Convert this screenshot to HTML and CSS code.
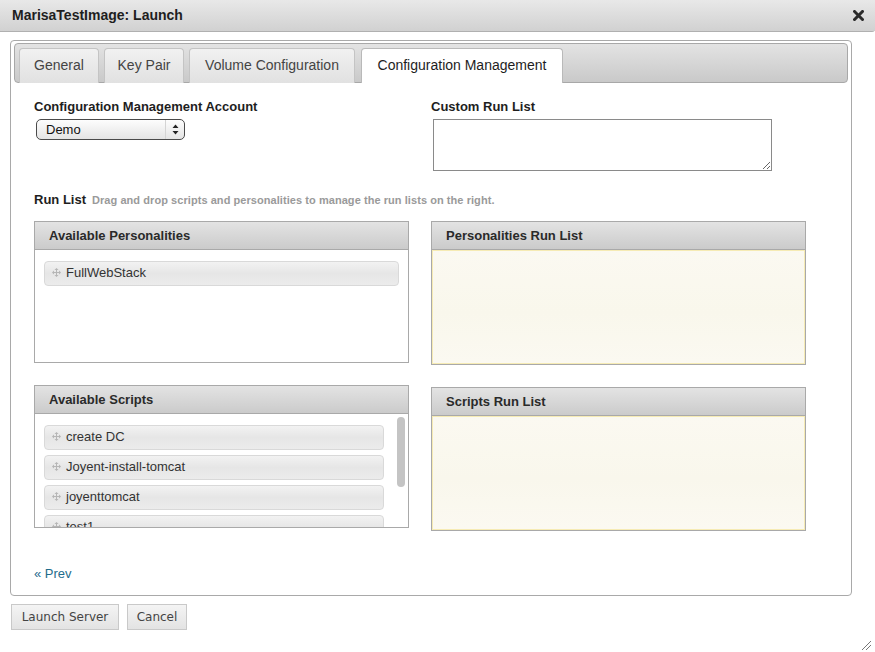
FILE: index.html
```html
<!DOCTYPE html>
<html>
<head>
<meta charset="utf-8">
<title>MarisaTestImage: Launch</title>
<link rel="stylesheet" href="styles.css">
</head>
<body>
<div class="dialog">
  <div class="titlebar">
    <span class="title">MarisaTestImage: Launch</span>
    <svg class="close" width="11" height="11" viewBox="0 0 11 11"><path d="M1.5 1.5 L9.5 9.5 M9.5 1.5 L1.5 9.5" stroke="#2a2a2a" stroke-width="3" stroke-linecap="square"/></svg>
  </div>
  <div class="content">
    <div class="panel">
      <ul class="tabs">
        <li class="tab">General</li>
        <li class="tab">Key Pair</li>
        <li class="tab">Volume Configuration</li>
        <li class="tab active">Configuration Management</li>
      </ul>
      <div class="tab-body">
        <div class="row-top">
          <div class="field">
            <div class="label">Configuration Management Account</div>
            <div class="select">
              <span class="select-text">Demo</span>
              <span class="select-arrows">
                <svg width="7" height="11" viewBox="0 0 7 11"><path d="M3.5 0.5 L6.5 4 L0.5 4 Z M0.5 7 L6.5 7 L3.5 10.5 Z" fill="#222"/></svg>
              </span>
            </div>
          </div>
          <div class="field">
            <div class="label">Custom Run List</div>
            <textarea class="textarea"></textarea>
          </div>
        </div>
        <div class="runlist-head"><span class="rl-title">Run List</span><span class="rl-hint">Drag and drop scripts and personalities to manage the run lists on the right.</span></div>
        <div class="lists">
          <div class="col">
            <div class="box box-pers">
              <div class="box-head">Available Personalities</div>
              <div class="box-body">
                <div class="items">
                  <div class="item"><svg class="move" width="9" height="9" viewBox="0 0 9 9"><path d="M4.5 0 L6.5 2 L2.5 2 Z M4.5 9 L6.5 7 L2.5 7 Z M0 4.5 L2 2.5 L2 6.5 Z M9 4.5 L7 2.5 L7 6.5 Z" fill="#b5b5b5"/><path d="M4.5 1.5 V7.5 M1.5 4.5 H7.5" stroke="#b5b5b5" stroke-width="1"/></svg>FullWebStack</div>
                </div>
              </div>
            </div>
            <div class="box box-scripts">
              <div class="box-head">Available Scripts</div>
              <div class="box-body scroll">
                <div class="items">
                  <div class="item"><svg class="move" width="9" height="9" viewBox="0 0 9 9"><path d="M4.5 0 L6.5 2 L2.5 2 Z M4.5 9 L6.5 7 L2.5 7 Z M0 4.5 L2 2.5 L2 6.5 Z M9 4.5 L7 2.5 L7 6.5 Z" fill="#b5b5b5"/><path d="M4.5 1.5 V7.5 M1.5 4.5 H7.5" stroke="#b5b5b5" stroke-width="1"/></svg>create DC</div>
                  <div class="item"><svg class="move" width="9" height="9" viewBox="0 0 9 9"><path d="M4.5 0 L6.5 2 L2.5 2 Z M4.5 9 L6.5 7 L2.5 7 Z M0 4.5 L2 2.5 L2 6.5 Z M9 4.5 L7 2.5 L7 6.5 Z" fill="#b5b5b5"/><path d="M4.5 1.5 V7.5 M1.5 4.5 H7.5" stroke="#b5b5b5" stroke-width="1"/></svg>Joyent-install-tomcat</div>
                  <div class="item"><svg class="move" width="9" height="9" viewBox="0 0 9 9"><path d="M4.5 0 L6.5 2 L2.5 2 Z M4.5 9 L6.5 7 L2.5 7 Z M0 4.5 L2 2.5 L2 6.5 Z M9 4.5 L7 2.5 L7 6.5 Z" fill="#b5b5b5"/><path d="M4.5 1.5 V7.5 M1.5 4.5 H7.5" stroke="#b5b5b5" stroke-width="1"/></svg>joyenttomcat</div>
                  <div class="item"><svg class="move" width="9" height="9" viewBox="0 0 9 9"><path d="M4.5 0 L6.5 2 L2.5 2 Z M4.5 9 L6.5 7 L2.5 7 Z M0 4.5 L2 2.5 L2 6.5 Z M9 4.5 L7 2.5 L7 6.5 Z" fill="#b5b5b5"/><path d="M4.5 1.5 V7.5 M1.5 4.5 H7.5" stroke="#b5b5b5" stroke-width="1"/></svg>test1</div>
                </div>
                <div class="scrollbar"><div class="thumb"></div></div>
              </div>
            </div>
          </div>
          <div class="col">
            <div class="box box-run">
              <div class="box-head">Personalities Run List</div>
              <div class="box-body drop"></div>
            </div>
            <div class="box box-run">
              <div class="box-head">Scripts Run List</div>
              <div class="box-body drop"></div>
            </div>
          </div>
        </div>
        <a class="prev" href="#">« Prev</a>
      </div>
    </div>
    <div class="buttons">
      <button class="btn btn-launch">Launch Server</button>
      <button class="btn btn-cancel">Cancel</button>
    </div>
  </div>
  <svg class="grip" width="11" height="11" viewBox="0 0 11 11"><path d="M1 10 L10 1 M5 10 L10 5" stroke="#777" stroke-width="1"/></svg>
</div>
</body>
</html>
```

FILE: styles.css
```css
* { box-sizing: border-box; }
html, body { margin: 0; padding: 0; background: #fff; }
body { font-family: "Liberation Sans", Arial, sans-serif; color: #222; }

.dialog { position: relative; width: 875px; height: 652px; }

.titlebar {
  height: 32px;
  display: flex;
  align-items: center;
  justify-content: space-between;
  padding: 0 11px 1px 12px;
  background: linear-gradient(#e8e8e8, #d1d1d1);
  border-bottom: 1px solid #b0b0b0;
  border-bottom-right-radius: 3px;
}
.title { font-weight: bold; font-size: 14px; color: #1e1e1e; }
.close { display: block; margin-top: 1px; }

.content { padding: 8px 23px 0 10px; }

.panel {
  width: 842px;
  border: 1px solid #a9a9a9;
  border-radius: 4px;
  padding: 2px 3px 0 3px;
}

.tabs {
  list-style: none;
  margin: 0;
  height: 40px;
  padding: 4px 4px 0 4px;
  display: flex;
  align-items: flex-end;
  gap: 5px;
  border: 1px solid #a8a8a8;
  border-radius: 4px;
  background: linear-gradient(#e3e3e3, #c9c9c9);
}
.tab {
  height: 35px;
  margin-bottom: -1px;
  padding: 0 0 3px 0;
  display: flex;
  align-items: center;
  justify-content: center;
  white-space: nowrap;
  font-size: 14px;
  color: #444;
  border: 1px solid #c4c4c4;
  border-bottom: none;
  border-radius: 4px 4px 0 0;
  background: linear-gradient(#f1f1f1, #e1e1e1);
}
.tab:nth-child(1) { width: 80px; }
.tab:nth-child(2) { width: 80px; }
.tab:nth-child(3) { width: 166px; }
.tab.active {
  width: 202px;
  margin-left: 1px;
  background: #fff;
  color: #1e1e1e;
  border-color: #b9b9b9;
}

.tab-body { padding: 16px 20px 13px 20px; }

.row-top {
  display: grid;
  grid-template-columns: 375px 375px;
  column-gap: 22px;
}
.label {
  font-weight: bold;
  font-size: 13px;
  line-height: 16px;
  color: #1e1e1e;
  margin-bottom: 4px;
}
.select {
  margin-left: 2px;
  width: 149px;
  height: 21px;
  border: 1px solid #4a4a4a;
  border-radius: 5px;
  background: linear-gradient(#fdfdfd, #e4e4e4);
  display: flex;
  align-items: center;
  justify-content: space-between;
  padding: 0 0 0 9px;
}
.select-text { font-size: 13px; color: #111; }
.select-arrows {
  height: 100%;
  width: 19px;
  display: flex;
  align-items: center;
  justify-content: center;
  border-left: 1px solid #d4d4d4;
}
.select-arrows svg { display: block; }
.textarea {
  display: block;
  margin-left: 2px;
  width: 339px;
  height: 52px;
  border: 1px solid #8a8a8a;
  resize: both;
  font-family: inherit;
}

.runlist-head {
  margin-top: 21px;
  line-height: 16px;
  display: flex;
  align-items: baseline;
  gap: 6px;
}
.rl-title { font-weight: bold; font-size: 13px; color: #1e1e1e; }
.rl-hint { font-weight: bold; font-size: 11px; letter-spacing: 0.06px; color: #9a9a9a; }

.lists {
  margin-top: 13px;
  display: grid;
  grid-template-columns: 375px 375px;
  column-gap: 22px;
}
.col { display: flex; flex-direction: column; gap: 22px; }

.box {
  border: 1px solid #a9a9a9;
  display: flex;
  flex-direction: column;
}
.box-pers { height: 142px; }
.box-scripts { height: 143px; }
.box-run { height: 144px; }
.box-head {
  height: 28px;
  flex: none;
  display: flex;
  align-items: center;
  padding: 0 14px;
  font-weight: bold;
  font-size: 13px;
  color: #2a2a2a;
  background: linear-gradient(#e3e3e3, #cbcbcb);
  border-bottom: 1px solid #a9a9a9;
}
.box-body { flex: 1; overflow: hidden; background: #fff; }
.box-body.scroll { display: flex; }
.box-body.drop {
  background: linear-gradient(#fbf9f1, #f9f7ec 55%, #fbf9f1);
  border: 1px solid #f6ebb4;
}

.items { flex: 1; padding: 11px 9px 0 9px; display: flex; flex-direction: column; gap: 5px; }
.scroll .items { padding-right: 10px; }
.item {
  flex: none;
  height: 25px;
  border: 1px solid #d9d9d9;
  border-radius: 4px;
  background: linear-gradient(#f2f2f2, #e6e6e6 50%, #ececec);
  display: flex;
  align-items: center;
  padding: 0 0 2px 7px;
  font-size: 13px;
  color: #333;
}
.move { display: block; margin-right: 5px; flex: none; }

.scrollbar { width: 14px; flex: none; padding: 3px 3px 0 3px; }
.thumb { width: 8px; height: 70px; border-radius: 4px; background: #c4c4c4; }

.prev {
  display: inline-block;
  margin-top: 35px;
  font-size: 13px;
  line-height: 16px;
  color: #1f6c8c;
  text-decoration: none;
}

.buttons { margin-top: 8px; display: flex; gap: 8px; padding-left: 1px; }
.btn {
  height: 26px;
  font-family: "DejaVu Sans", "Liberation Sans", sans-serif;
  font-size: 12px;
  color: #444;
  border: 1px solid #c9c9c9;
  background: linear-gradient(#f4f4f4, #e3e3e3);
  border-radius: 0;
  padding: 0;
}
.btn-launch { width: 108px; }
.btn-cancel { width: 60px; }

.grip { position: absolute; right: 3px; bottom: 1px; }
```
